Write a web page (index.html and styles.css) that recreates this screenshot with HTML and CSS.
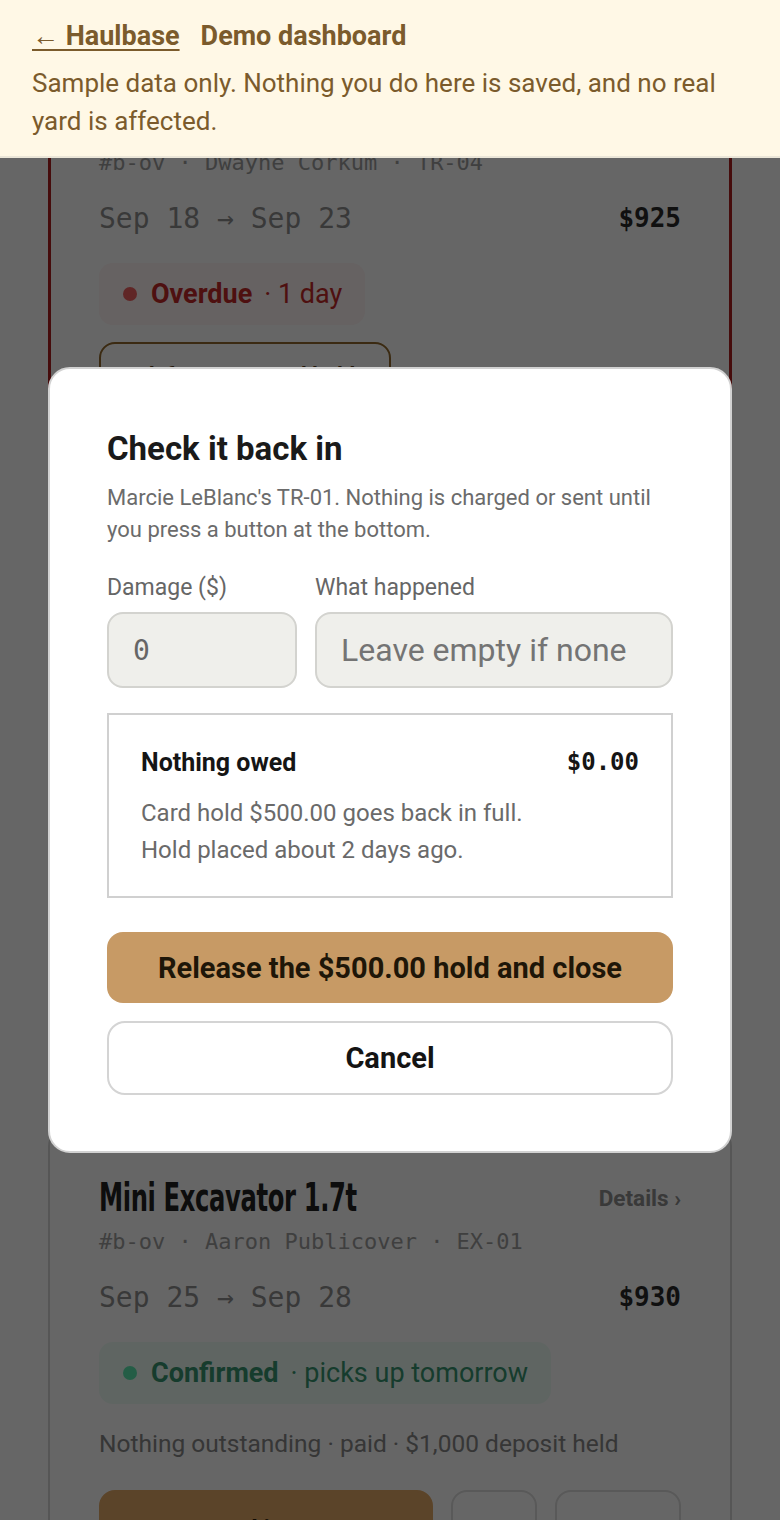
FILE: index.html
```html
<!DOCTYPE html>
<html lang="en">
<head>
<meta charset="utf-8">
<title>Haulbase — Demo dashboard</title>
<link rel="stylesheet" href="styles.css">
</head>
<body>
<header class="demo-bar">
  <div class="demo-bar__top">
    <a class="demo-bar__back" href="#">← Haulbase</a>
    <span class="demo-bar__title">Demo dashboard</span>
  </div>
  <p class="demo-bar__note">Sample data only. Nothing you do here is saved, and no real yard is affected.</p>
</header>

<main class="list">
  <article class="booking booking--overdue">
    <div class="booking__head">
      <h2 class="booking__name"><span class="booking__name-text">Car Hauler 18ft</span></h2>
      <a class="booking__more" href="#">Details ›</a>
    </div>
    <div class="booking__meta">#b-ov · Dwayne Corkum · TR-04</div>
    <div class="booking__dates"><span>Sep 18 → Sep 23</span><span class="booking__price">$925</span></div>
    <div class="status status--late"><span class="status__dot"></span><strong>Overdue</strong><span class="status__extra">· 1 day</span></div>
    <button class="ghost-btn" type="button">Ask for a new card hold ›</button>
    <p class="booking__note">Late fee $75 per day · $500 card hold</p>
    <div class="booking__actions">
      <button class="act act--main" type="button">Check it in</button>
      <button class="act act--small" type="button">Call</button>
      <button class="act act--mid" type="button">Extend</button>
    </div>
  </article>

  <article class="booking">
    <div class="booking__head">
      <h2 class="booking__name"><span class="booking__name-text">Utility Trailer 5x8</span></h2>
      <a class="booking__more" href="#">Details ›</a>
    </div>
    <div class="booking__meta">#b-ov · Marcie LeBlanc · TR-01</div>
    <div class="booking__dates"><span>Sep 20 → Sep 24</span><span class="booking__price">$340</span></div>
    <div class="status status--out"><span class="status__dot"></span><strong>Out</strong><span class="status__extra">· due back today</span></div>
    <p class="booking__note">Nothing outstanding · paid · $500 hold placed</p>
    <div class="booking__actions">
      <button class="act act--main" type="button">Check it in</button>
      <button class="act act--small" type="button">Call</button>
      <button class="act act--mid" type="button">Extend</button>
    </div>
  </article>

  <article class="booking">
    <div class="booking__head">
      <h2 class="booking__name"><span class="booking__name-text">Mini Excavator 1.7t</span></h2>
      <a class="booking__more" href="#">Details ›</a>
    </div>
    <div class="booking__meta">#b-ov · Aaron Publicover · EX-01</div>
    <div class="booking__dates"><span>Sep 25 → Sep 28</span><span class="booking__price">$930</span></div>
    <div class="status status--ok"><span class="status__dot"></span><strong>Confirmed</strong><span class="status__extra">· picks up tomorrow</span></div>
    <p class="booking__note">Nothing outstanding · paid · $1,000 deposit held</p>
    <div class="booking__actions">
      <button class="act act--main" type="button">Hand it over</button>
      <button class="act act--small" type="button">⋯</button>
      <button class="act act--mid" type="button">Move</button>
    </div>
  </article>
</main>

<div class="scrim">
  <section class="sheet" role="dialog" aria-labelledby="sheet-title">
    <h1 class="sheet__title" id="sheet-title">Check it back in</h1>
    <p class="sheet__lead">Marcie LeBlanc's TR-01. Nothing is charged or sent until you press a button at the bottom.</p>

    <div class="fields">
      <label class="field-label" for="damage">Damage ($)</label>
      <label class="field-label" for="what">What happened</label>
      <input class="field-input field-input--mono" id="damage" type="text" value="0">
      <input class="field-input" id="what" type="text" placeholder="Leave empty if none">
    </div>

    <div class="settle">
      <div class="settle__row">
        <span class="settle__label">Nothing owed</span>
        <span class="settle__amount">$0.00</span>
      </div>
      <p class="settle__text">Card hold $500.00 goes back in full.<br>Hold placed about 2 days ago.</p>
    </div>

    <button class="btn btn--primary" type="button">Release the $500.00 hold and close</button>
    <button class="btn btn--cancel" type="button">Cancel</button>
  </section>
</div>
</body>
</html>
```

FILE: styles.css
```css
* {
  box-sizing: border-box;
  margin: 0;
  padding: 0;
}

html,
body {
  background: #ffffff;
}

body {
  font-family: Roboto, "Liberation Sans", sans-serif;
  color: #222222;
  padding: 49px 48px 40px;
}

/* demo banner */
.demo-bar {
  position: fixed;
  top: 0;
  left: 0;
  right: 0;
  z-index: 20;
  background: #fff8e6;
  border-bottom: 2px solid #ebe6d8;
  padding: 16px 32px 16px;
  color: #7b5b2c;
}

.demo-bar__top {
  display: flex;
  align-items: center;
  gap: 21px;
  height: 40px;
  font-size: 27px;
  font-weight: 700;
}

.demo-bar__back {
  color: inherit;
  text-decoration: underline;
  text-decoration-thickness: 2px;
  text-underline-offset: 4px;
}

.demo-bar__note {
  margin-top: 8px;
  font-size: 26px;
  line-height: 38px;
}

/* booking list */
.list {
  display: flex;
  flex-direction: column;
  gap: 10px;
}

.booking {
  border: 2px solid #d8d8d8;
  border-radius: 18px;
  padding: 46px 49px;
  background: #ffffff;
}

.booking--overdue {
  border: 3px solid #b01f1f;
  padding: 45px 48px;
}

.booking__head {
  display: flex;
  justify-content: space-between;
  align-items: center;
  height: 44px;
}

.booking__name {
  font-family: "DejaVu Sans Condensed", "DejaVu Sans", sans-serif;
  font-size: 39px;
  line-height: 44px;
  font-weight: 700;
  color: #222222;
  white-space: nowrap;
}

.booking__name-text {
  display: inline-block;
  transform: scaleX(0.69);
  transform-origin: left center;
  letter-spacing: -0.5px;
}

.booking__more {
  font-size: 22.5px;
  font-weight: 700;
  color: #8e8e8e;
  text-decoration: none;
}

.booking__meta {
  margin-top: 6px;
  font-family: "DejaVu Sans Mono", "Liberation Mono", monospace;
  font-size: 22px;
  line-height: 32px;
  color: #9e9e9e;
}

.booking__dates {
  margin-top: 21px;
  display: flex;
  justify-content: space-between;
  align-items: center;
  height: 36px;
  font-family: "DejaVu Sans Mono", "Liberation Mono", monospace;
  font-size: 28px;
  color: #8f8f8f;
}

.booking__price {
  font-size: 26px;
  font-weight: 700;
  color: #2a2a2a;
}

.status {
  margin-top: 27px;
  display: flex;
  align-items: center;
  width: fit-content;
  height: 62px;
  padding: 0 23px 0 24px;
  border-radius: 14px;
  font-size: 27px;
}

.status__dot {
  width: 14px;
  height: 14px;
  border-radius: 50%;
  margin-right: 14px;
}

.status__extra {
  margin-left: 12px;
}

.status--late {
  background: #fff4f4;
  color: #c42a2a;
}

.status--late .status__dot {
  background: #f06060;
}

.status--ok {
  background: #eefcf6;
  color: #379670;
}

.status--ok .status__dot {
  background: #5ae8b0;
}

.status--out {
  background: #fff6e6;
  color: #c88a2a;
}

.status--out .status__dot {
  background: #e0a040;
}

.ghost-btn {
  display: block;
  margin-top: 17px;
  height: 66px;
  padding: 0 22px;
  border: 2px solid #946a2d;
  border-radius: 16px;
  background: #ffffff;
  font-family: inherit;
  font-size: 22px;
  font-weight: 700;
  color: #5a4020;
}

.booking__note {
  margin-top: 24px;
  font-size: 24.5px;
  line-height: 32px;
  color: #878787;
}

.booking__actions {
  margin-top: 30px;
  display: flex;
  gap: 18px;
}

.act {
  height: 78px;
  border-radius: 16px;
  font-family: inherit;
  font-size: 24px;
  font-weight: 700;
  background: #ffffff;
  border: 2px solid #dedede;
  color: #555555;
}

.act--main {
  width: 334px;
  background: #e4aa67;
  border-color: #e4aa67;
  color: #2a1c08;
}

.act--small {
  width: 86px;
}

.act--mid {
  width: 126px;
}

/* modal */
.scrim {
  position: fixed;
  inset: 0;
  z-index: 10;
  background: rgba(0, 0, 0, 0.6);
  display: flex;
  align-items: center;
  padding: 0 48px;
}

.sheet {
  width: 100%;
  background: #ffffff;
  border: 2px solid #d2d2d2;
  border-radius: 22px;
  padding: 60px 57px 56px;
}

.sheet__title {
  font-size: 33px;
  line-height: 40px;
  font-weight: 700;
  color: #1a1a1a;
}

.sheet__lead {
  margin-top: 13px;
  font-size: 22px;
  line-height: 32px;
  color: #6b6b6b;
}

.fields {
  margin-top: 27px;
  display: grid;
  grid-template-columns: 190px 1fr;
  column-gap: 18px;
  row-gap: 9px;
}

.field-label {
  font-size: 23px;
  line-height: 30px;
  color: #666666;
}

.field-input {
  width: 100%;
  height: 76px;
  padding: 0 24px;
  border: 2px solid #d3d3cf;
  border-radius: 16px;
  background: #efefeb;
  font-family: inherit;
  font-size: 32px;
  color: #666666;
  outline: none;
}

.field-input::placeholder {
  color: #747474;
}

.field-input--mono {
  font-family: "DejaVu Sans Mono", "Liberation Mono", monospace;
  font-size: 28px;
}

.settle {
  margin-top: 25px;
  border: 2px solid #d0d0d0;
  padding: 30px 32px 27px;
}

.settle__row {
  display: flex;
  justify-content: space-between;
  align-items: center;
  height: 34px;
}

.settle__label {
  font-size: 25px;
  font-weight: 700;
  color: #151515;
}

.settle__amount {
  font-family: "DejaVu Sans Mono", "Liberation Mono", monospace;
  font-size: 24px;
  font-weight: 700;
  color: #151515;
}

.settle__text {
  margin-top: 16px;
  font-size: 24px;
  line-height: 37px;
  color: #6a6a6a;
}

.btn {
  display: block;
  width: 100%;
  font-family: inherit;
  font-size: 29px;
  font-weight: 700;
  cursor: pointer;
}

.btn--primary {
  margin-top: 34px;
  height: 71px;
  border: 0;
  border-radius: 16px;
  background: #c79a65;
  color: #1e1608;
}

.btn--cancel {
  margin-top: 18px;
  height: 74px;
  border: 2px solid #d4d4d4;
  border-radius: 18px;
  background: #ffffff;
  color: #141414;
}
```
